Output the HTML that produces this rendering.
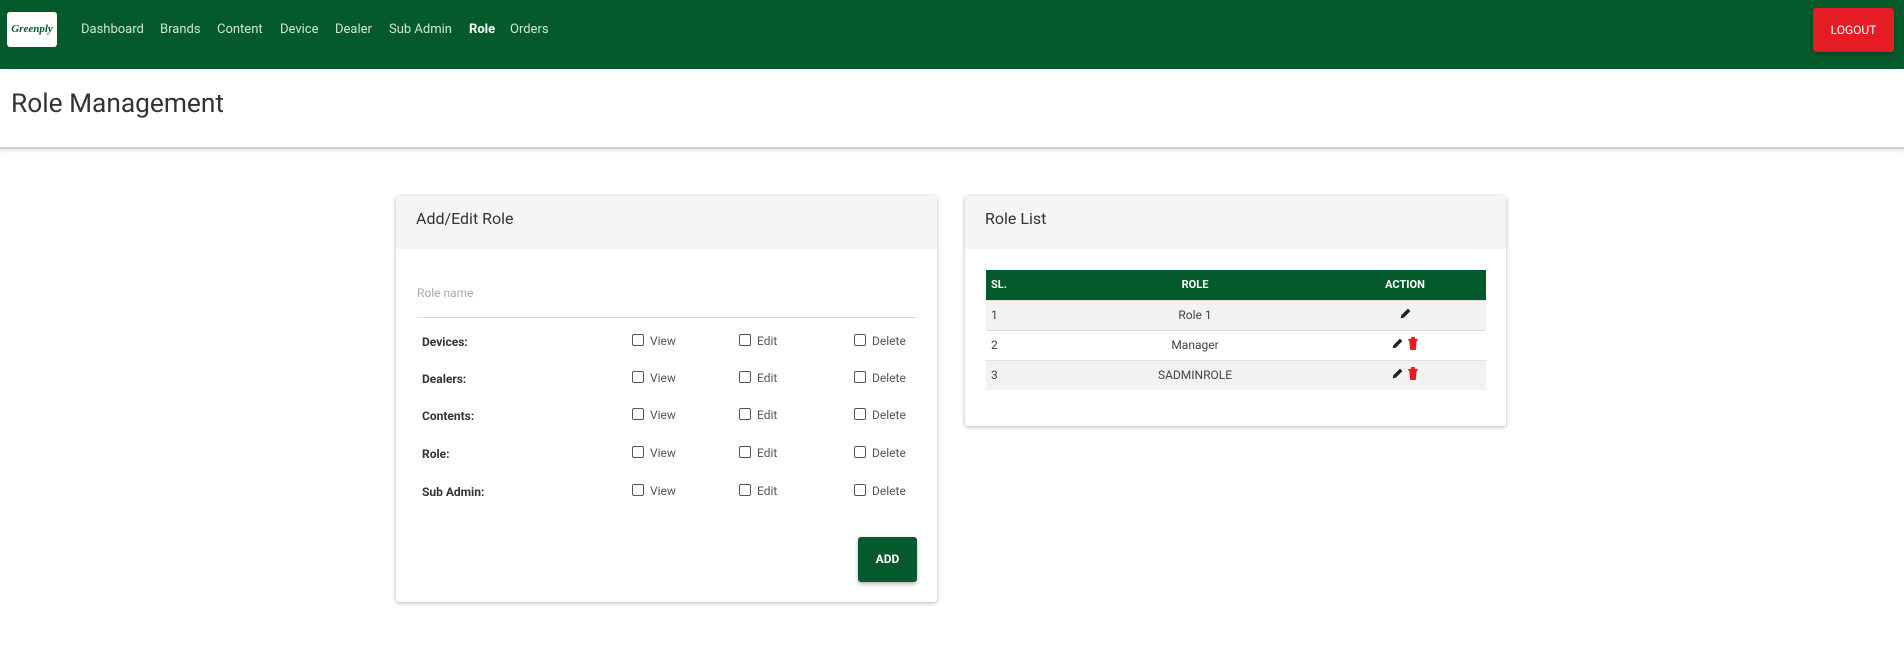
<!DOCTYPE html>
<html><head><meta charset="utf-8"><style>
*{box-sizing:border-box;margin:0;padding:0}
body{width:1904px;height:664px;background:#fff;font-family:"Roboto","Liberation Sans",sans-serif;color:#333;position:relative;overflow:hidden}
.nav{position:absolute;left:0;top:0;width:1904px;height:69px;background:#055a2b}
.logo{position:absolute;left:7px;top:12px;width:50px;height:35px;background:#fff;border-radius:3px;font:italic bold 11px "Liberation Serif",serif;color:#055a2b;text-align:center;line-height:35px}
.nav a{position:absolute;top:22px;font-size:13px;color:#cfe8d4;text-decoration:none}
.logout{position:absolute;left:1813px;top:8px;width:81px;height:44px;background:#e51c23;color:#fff;font-size:12px;text-align:center;line-height:44px;border-radius:3px;box-shadow:0 2px 4px rgba(0,0,0,.3)}
.hdr{position:absolute;left:0;top:69px;width:1904px;height:80px;border-bottom:2px solid #ccc;box-shadow:0 2px 3px rgba(0,0,0,.1)}
.hdr h1{position:absolute;left:11px;top:20px;font-size:26.3px;font-weight:normal;color:#333}
.card{position:absolute;background:#fff;border-radius:3px;box-shadow:0 1px 4px rgba(0,0,0,.3)}
.ch{height:53px;background:#f5f5f5;padding:13px 20px;font-size:16px;color:#333}
.lbl{position:absolute;left:26px;font-size:12px;font-weight:bold;color:#333}
.cb{position:absolute;font-size:12px;color:#555}
.cb i{display:inline-block;width:12px;height:12px;border:1px solid #555;border-radius:2px;vertical-align:-1px;margin-right:6px}
table{position:absolute;left:21px;top:74px;width:500px;border-collapse:collapse;font-size:12px;table-layout:fixed}
th{background:#055a2b;color:#fff;font-size:11px;height:30px}
td{height:30px;color:#444;border-top:1px solid #ddd}
tr:nth-child(even) td{background:#f2f2f2}
</style></head><body>
<div class="nav">
<div class="logo">Greenply</div>
<a style="left:81px">Dashboard</a><a style="left:160px">Brands</a><a style="left:217px">Content</a><a style="left:280px">Device</a><a style="left:335px">Dealer</a><a style="left:389px">Sub Admin</a><a style="left:469px;color:#fff;font-weight:bold">Role</a><a style="left:510px">Orders</a>
<div class="logout">LOGOUT</div>
</div>
<div class="hdr"><h1>Role Management</h1></div>

<div class="card" style="left:396px;top:196px;width:541px;height:406px">
<div class="ch">Add/Edit Role</div>
<div style="position:absolute;left:21px;top:90px;font-size:12px;color:#aaa">Role name</div>
<div style="position:absolute;left:21px;top:121px;width:500px;border-top:1px solid #ddd"></div>
<div class="lbl" style="top:139px">Devices:</div>
<div class="lbl" style="top:176px">Dealers:</div>
<div class="lbl" style="top:213px">Contents:</div>
<div class="lbl" style="top:251px">Role:</div>
<div class="lbl" style="top:289px">Sub Admin:</div>
<div class="cb" style="left:236px;top:138px"><i></i>View</div><div class="cb" style="left:343px;top:138px"><i></i>Edit</div><div class="cb" style="left:458px;top:138px"><i></i>Delete</div>
<div class="cb" style="left:236px;top:175px"><i></i>View</div><div class="cb" style="left:343px;top:175px"><i></i>Edit</div><div class="cb" style="left:458px;top:175px"><i></i>Delete</div>
<div class="cb" style="left:236px;top:212px"><i></i>View</div><div class="cb" style="left:343px;top:212px"><i></i>Edit</div><div class="cb" style="left:458px;top:212px"><i></i>Delete</div>
<div class="cb" style="left:236px;top:250px"><i></i>View</div><div class="cb" style="left:343px;top:250px"><i></i>Edit</div><div class="cb" style="left:458px;top:250px"><i></i>Delete</div>
<div class="cb" style="left:236px;top:288px"><i></i>View</div><div class="cb" style="left:343px;top:288px"><i></i>Edit</div><div class="cb" style="left:458px;top:288px"><i></i>Delete</div>
<div style="position:absolute;left:462px;top:341px;width:59px;height:45px;background:#055a2b;color:#fff;font-size:12px;font-weight:bold;text-align:center;line-height:45px;border-radius:3px;box-shadow:0 2px 4px rgba(0,0,0,.3)">ADD</div>
</div>

<div class="card" style="left:965px;top:196px;width:541px;height:230px">
<div class="ch">Role List</div>
<table>
<tr><th style="text-align:left;padding-left:5px;width:80px">SL.</th><th style="width:258px">ROLE</th><th style="width:162px">ACTION</th></tr>
<tr><td style="padding-left:5px">1</td><td style="text-align:center">Role 1</td><td style="text-align:center"><svg width="13" height="13" viewBox="0 0 16 16"><path d="M2 14l1-4 8-8 3 3-8 8z" fill="#222"/></svg></td></tr>
<tr><td style="padding-left:5px">2</td><td style="text-align:center">Manager</td><td style="text-align:center"><svg width="13" height="13" viewBox="0 0 16 16"><path d="M2 14l1-4 8-8 3 3-8 8z" fill="#222"/></svg> <svg width="12" height="13" viewBox="0 0 12 14"><path d="M1 2h10v2H1zM4 0h4v2H4zM2 4h8l-1 10H3z" fill="#e51c23"/></svg></td></tr>
<tr><td style="padding-left:5px">3</td><td style="text-align:center">SADMINROLE</td><td style="text-align:center"><svg width="13" height="13" viewBox="0 0 16 16"><path d="M2 14l1-4 8-8 3 3-8 8z" fill="#222"/></svg> <svg width="12" height="13" viewBox="0 0 12 14"><path d="M1 2h10v2H1zM4 0h4v2H4zM2 4h8l-1 10H3z" fill="#e51c23"/></svg></td></tr>
</table>
</div>
</body></html>
